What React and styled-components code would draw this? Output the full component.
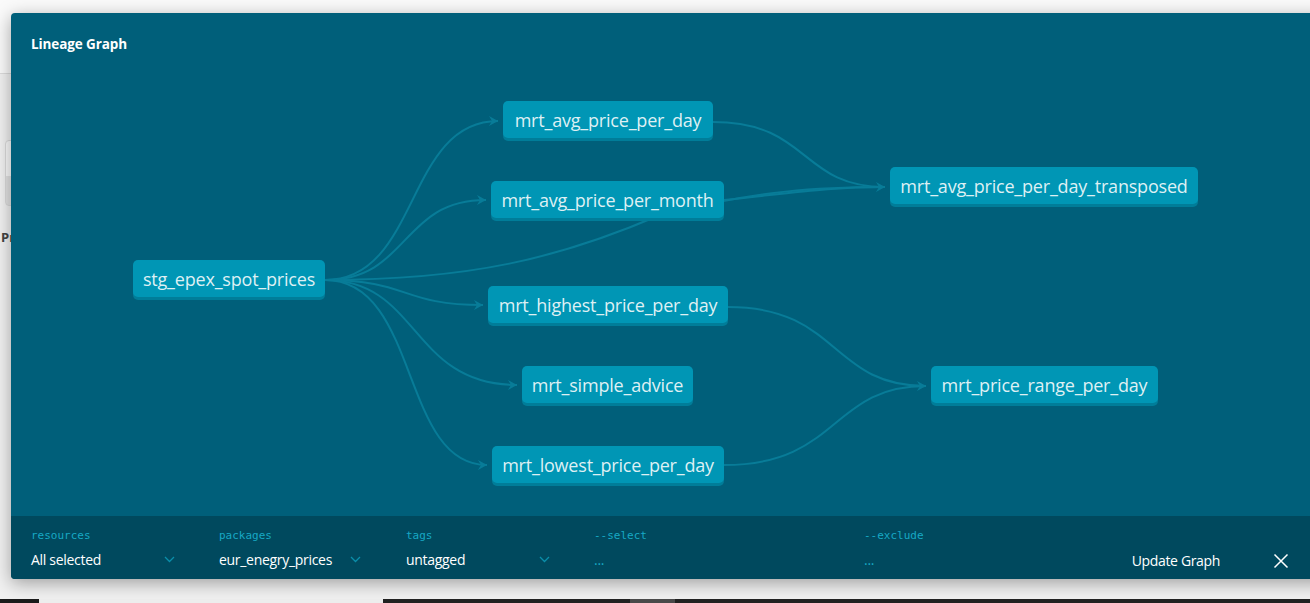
import React from 'react';
import styled, { createGlobalStyle } from 'styled-components';

const GlobalStyle = createGlobalStyle`
    html, body {
        margin: 0;
        padding: 0;
        width: 100%;
        height: 100%;
        overflow: hidden;
        background: #f3f3f3;
        font-family: "Open Sans", "Noto Sans", sans-serif;
    }
    #root {
        height: 100%;
    }
`;

const Page = styled.div`
    position: relative;
    width: 1310px;
    height: 603px;
    overflow: hidden;
    background: #f1f1f1;
`;

const PageHeader = styled.div`
    height: 73px;
    background: #fafafa;
    border-bottom: 1px solid #dcdcdc;
`;

const PageBody = styled.div`
    padding: 66px 0 0 5px;
`;

const PageCard = styled.div`
    width: 120px;
    height: 64px;
    border: 1px solid #dadada;
    border-radius: 4px;
    background: linear-gradient(#fbfbfb 0 55%, #e4e4e4 55% 100%);
`;

const PageHeading = styled.div`
    margin: 22px 0 0 -4px;
    font-size: 13px;
    font-weight: 700;
    color: #444;
`;

const TaskStrip = styled.div`
    position: absolute;
    left: 0;
    right: 0;
    bottom: 0;
    height: 4px;
    display: grid;
    grid-template-columns: 39px 344px 247px 45px 1fr;
`;

const StripPart = styled.div`
    background: ${(p) => p.$color};
`;

const Modal = styled.div`
    position: absolute;
    top: 13px;
    left: 11px;
    width: 1320px;
    height: 566px;
    display: flex;
    flex-direction: column;
    background: #005f7a;
    border-radius: 4px 0 0 4px;
    box-shadow: 0 4px 18px rgba(0, 0, 0, 0.35);
    overflow: hidden;
`;

const Title = styled.h1`
    margin: 0;
    padding: 22px 20px 0;
    height: 40px;
    font-size: 13.5px;
    font-weight: 700;
    color: #ffffff;
    letter-spacing: -0.1px;
`;

const Canvas = styled.div`
    position: relative;
    flex: 1;
`;

const Edges = styled.svg`
    position: absolute;
    top: 0;
    left: 0;
    width: 100%;
    height: 100%;
    overflow: visible;
`;

const Node = styled.div`
    position: absolute;
    left: ${(p) => p.$x - 11}px;
    top: ${(p) => p.$y - 75}px;
    width: ${(p) => p.$w}px;
    height: 37px;
    display: flex;
    align-items: center;
    justify-content: center;
    background: #0096b5;
    border-radius: 5px;
    box-shadow: 0 3px 0 #007d99;
    color: #def0f4;
    font-family: "Open Sans", "Noto Sans", sans-serif;
    font-size: 18px;
    letter-spacing: -0.2px;
    white-space: nowrap;
`;

const Footer = styled.div`
    height: 63px;
    display: grid;
    grid-template-columns: 188px 187px 188px 270px 200px 1fr;
    align-items: start;
    padding: 13px 0 0 20px;
    box-sizing: border-box;
    background: #00495e;
`;

const Field = styled.div`
    display: flex;
    flex-direction: column;
    gap: 7px;
`;

const Label = styled.div`
    font-family: "DejaVu Sans Mono", "Liberation Mono", monospace;
    font-size: 11px;
    line-height: 13px;
    color: #17a8c4;
`;

const Value = styled.div`
    display: flex;
    align-items: center;
    justify-content: space-between;
    width: ${(p) => p.$w || 'auto'};
    height: 20px;
    font-size: 14px;
    color: ${(p) => (p.$muted ? '#17a8c4' : '#ffffff')};
    letter-spacing: -0.3px;
    white-space: nowrap;
`;

const Chevron = styled.svg`
    width: 11px;
    height: 7px;
    margin-right: 4px;
`;

const Actions = styled.div`
    display: flex;
    align-items: center;
    justify-content: flex-end;
    gap: 53px;
    padding: 22px 42px 0 0;
`;

const UpdateButton = styled.button`
    border: none;
    background: none;
    padding: 0;
    flex-shrink: 0;
    white-space: nowrap;
    font-family: "Open Sans", "Noto Sans", sans-serif;
    font-size: 14px;
    letter-spacing: -0.35px;
    color: #ffffff;
    cursor: pointer;
`;

const CloseButton = styled.button`
    border: none;
    background: none;
    padding: 0;
    flex-shrink: 0;
    width: 16px;
    height: 16px;
    display: flex;
    cursor: pointer;
`;

const nodes = [
    { name: 'stg_epex_spot_prices', x: 133, y: 260, w: 192 },
    { name: 'mrt_avg_price_per_day', x: 503, y: 101, w: 210 },
    { name: 'mrt_avg_price_per_month', x: 491, y: 181, w: 233 },
    { name: 'mrt_avg_price_per_day_transposed', x: 890, y: 167, w: 308 },
    { name: 'mrt_highest_price_per_day', x: 488, y: 286, w: 240 },
    { name: 'mrt_simple_advice', x: 522, y: 366, w: 171 },
    { name: 'mrt_lowest_price_per_day', x: 492, y: 446, w: 232 },
    { name: 'mrt_price_range_per_day', x: 931, y: 366, w: 227 },
];

// page coordinates, shifted into the canvas by the group transform
const edges = [
    { d: 'M325,280 C420,280 405,121 498,121', arrow: [498, 121] },
    { d: 'M325,280 C410,280 400,200 486,200', arrow: [486, 200] },
    { d: 'M325,280 C470,280 560,258 660,215 C760,190 820,187 885,187', arrow: null },
    { d: 'M724,200 C800,192 830,187 885,187', arrow: [885, 187] },
    { d: 'M713,122 C810,122 800,187 885,187', arrow: null },
    { d: 'M325,280 C410,280 400,305 483,305', arrow: [483, 305] },
    { d: 'M325,280 C420,280 410,385 517,385', arrow: [517, 385] },
    { d: 'M325,280 C420,280 400,465 487,465', arrow: [487, 465] },
    { d: 'M728,307 C840,307 830,386 926,386', arrow: [926, 386] },
    { d: 'M724,465 C840,465 830,386 926,386', arrow: null },
];

const EDGE = '#087c98';

const ChevronIcon = () => (
    <Chevron viewBox="0 0 11 7">
        <path d="M1 1 L5.5 5.5 L10 1" fill="none" stroke="#0a8eaa" strokeWidth="1.3" />
    </Chevron>
);

const App = () => {
    return (
        <>
            <GlobalStyle />
            <Page>
                <PageHeader />
                <PageBody>
                    <PageCard />
                    <PageHeading>Pr</PageHeading>
                </PageBody>
                <TaskStrip>
                    <StripPart $color="#1b1b1b" />
                    <StripPart $color="#eeeeee" />
                    <StripPart $color="#222222" />
                    <StripPart $color="#4a4a4a" />
                    <StripPart $color="#222222" />
                </TaskStrip>

                <Modal>
                    <Title>Lineage Graph</Title>
                    <Canvas>
                        <Edges>
                            <g transform="translate(-11,-75)" fill="none" stroke={EDGE} strokeWidth="2">
                                {edges.map((e, i) => (
                                    <path key={i} d={e.d} />
                                ))}
                                {edges
                                    .filter((e) => e.arrow)
                                    .map((e, i) => (
                                        <path
                                            key={'a' + i}
                                            d={`M${e.arrow[0] - 9},${e.arrow[1] - 5} L${e.arrow[0]},${e.arrow[1]} L${e.arrow[0] - 9},${e.arrow[1] + 5} L${e.arrow[0] - 6},${e.arrow[1]} Z`}
                                            fill={EDGE}
                                            stroke="none"
                                        />
                                    ))}
                            </g>
                        </Edges>
                        {nodes.map((n) => (
                            <Node key={n.name} $x={n.x} $y={n.y} $w={n.w}>
                                {n.name}
                            </Node>
                        ))}
                    </Canvas>
                    <Footer>
                        <Field>
                            <Label>resources</Label>
                            <Value $w="148px">
                                All selected
                                <ChevronIcon />
                            </Value>
                        </Field>
                        <Field>
                            <Label>packages</Label>
                            <Value $w="146px">
                                eur_enegry_prices
                                <ChevronIcon />
                            </Value>
                        </Field>
                        <Field>
                            <Label>tags</Label>
                            <Value $w="148px">
                                untagged
                                <ChevronIcon />
                            </Value>
                        </Field>
                        <Field>
                            <Label>--select</Label>
                            <Value $muted>...</Value>
                        </Field>
                        <Field>
                            <Label>--exclude</Label>
                            <Value $muted>...</Value>
                        </Field>
                        <Actions>
                            <UpdateButton>Update Graph</UpdateButton>
                            <CloseButton>
                                <svg width="16" height="16" viewBox="0 0 16 16">
                                    <path d="M1.5 1.5 L14.5 14.5 M14.5 1.5 L1.5 14.5" stroke="#ffffff" strokeWidth="1.5" />
                                </svg>
                            </CloseButton>
                        </Actions>
                    </Footer>
                </Modal>
            </Page>
        </>
    );
};

export default App;
